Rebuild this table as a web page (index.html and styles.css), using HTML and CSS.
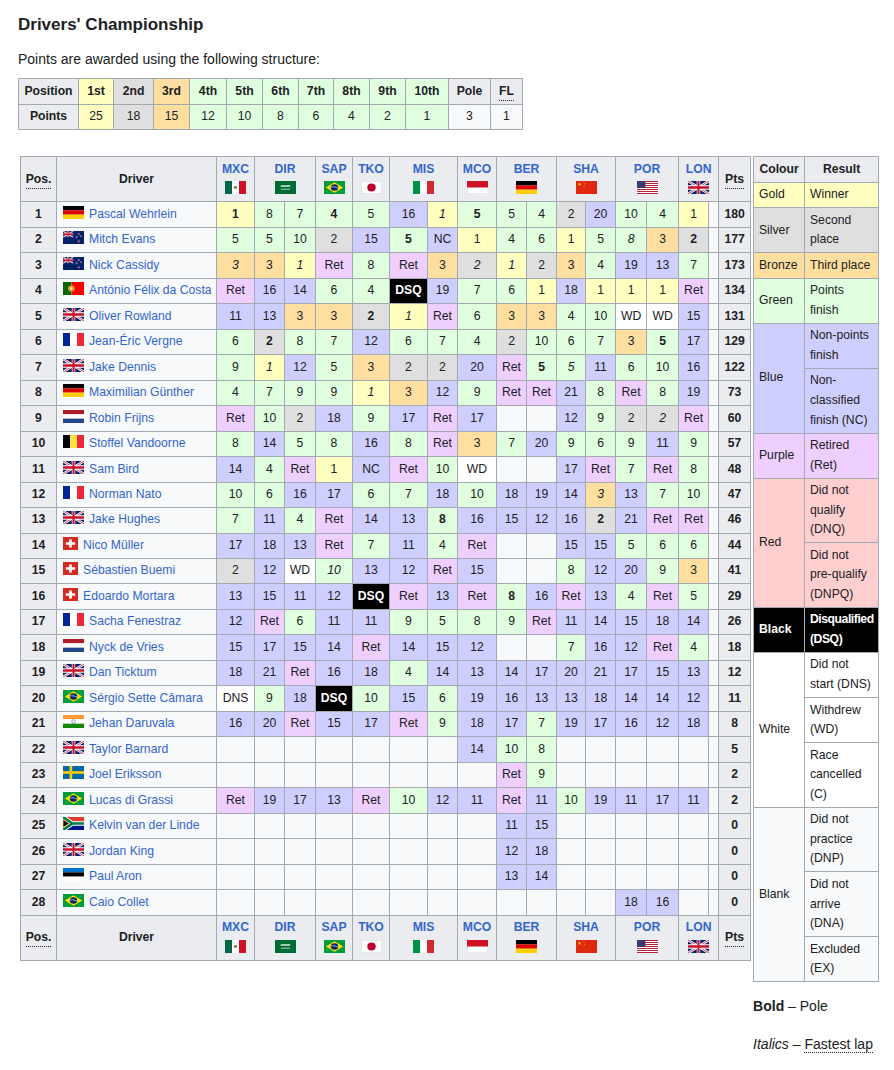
FILE: index.html
```html
<!DOCTYPE html>
<html lang="en">
<head>
<meta charset="utf-8">
<title>Drivers' Championship</title>
<link rel="stylesheet" href="styles.css">
</head>
<body>
<svg class="defs" width="0" height="0" aria-hidden="true">
  <defs>
    <symbol id="de" viewBox="0 0 5 3" preserveAspectRatio="none"><rect width="5" height="1" fill="#000"/><rect y="1" width="5" height="1" fill="#D00"/><rect y="2" width="5" height="1" fill="#FFCE00"/></symbol>
    <symbol id="gb" viewBox="0 0 60 30" preserveAspectRatio="none"><rect width="60" height="30" fill="#012169"/><path d="M0 0L60 30M60 0L0 30" stroke="#fff" stroke-width="6"/><path d="M0 0L60 30M60 0L0 30" stroke="#C8102E" stroke-width="2"/><path d="M30 0V30M0 15H60" stroke="#fff" stroke-width="10"/><path d="M30 0V30M0 15H60" stroke="#C8102E" stroke-width="6"/></symbol>
    <symbol id="nz" viewBox="0 0 60 30" preserveAspectRatio="none"><rect width="60" height="30" fill="#012169"/><use href="#gb" width="30" height="15"/><g fill="#C8102E" stroke="#fff" stroke-width="0.8"><circle cx="45" cy="7" r="2"/><circle cx="39" cy="14" r="2"/><circle cx="51" cy="12" r="1.8"/><circle cx="45" cy="24" r="2.2"/></g></symbol>
    <symbol id="pt" viewBox="0 0 30 20" preserveAspectRatio="none"><rect width="12" height="20" fill="#060"/><rect x="12" width="18" height="20" fill="#F00"/><circle cx="12" cy="10" r="4.5" fill="#FFE600"/><rect x="9.8" y="7.4" width="4.4" height="5.2" fill="#fff" stroke="#E00" stroke-width="0.9"/></symbol>
    <symbol id="fr" viewBox="0 0 3 2" preserveAspectRatio="none"><rect width="1" height="2" fill="#002395"/><rect x="1" width="1" height="2" fill="#fff"/><rect x="2" width="1" height="2" fill="#ED2939"/></symbol>
    <symbol id="nl" viewBox="0 0 3 3" preserveAspectRatio="none"><rect width="3" height="1" fill="#AE1C28"/><rect y="1" width="3" height="1" fill="#fff"/><rect y="2" width="3" height="1" fill="#21468B"/></symbol>
    <symbol id="be" viewBox="0 0 3 2" preserveAspectRatio="none"><rect width="1" height="2" fill="#000"/><rect x="1" width="1" height="2" fill="#FAE042"/><rect x="2" width="1" height="2" fill="#ED2939"/></symbol>
    <symbol id="ch" viewBox="0 0 32 32" preserveAspectRatio="none"><rect width="32" height="32" fill="#D52B1E"/><rect x="13" y="6" width="6" height="20" fill="#fff"/><rect x="6" y="13" width="20" height="6" fill="#fff"/></symbol>
    <symbol id="br" viewBox="0 0 20 14" preserveAspectRatio="none"><rect width="20" height="14" fill="#009C3B"/><polygon points="1.7,7 10,1.4 18.3,7 10,12.6" fill="#FFDF00"/><circle cx="10" cy="7" r="3.5" fill="#002776"/><path d="M6.6 6.3Q10 5.6 13.4 7.6" stroke="#fff" stroke-width="0.6" fill="none"/></symbol>
    <symbol id="in" viewBox="0 0 3 2" preserveAspectRatio="none"><rect width="3" height="0.667" fill="#FF9933"/><rect y="0.667" width="3" height="0.667" fill="#fff"/><rect y="1.333" width="3" height="0.667" fill="#138808"/><circle cx="1.5" cy="1" r="0.26" fill="none" stroke="#000080" stroke-width="0.06"/></symbol>
    <symbol id="se" viewBox="0 0 16 10" preserveAspectRatio="none"><rect width="16" height="10" fill="#006AA7"/><rect x="5" width="2" height="10" fill="#FECC00"/><rect y="4" width="16" height="2" fill="#FECC00"/></symbol>
    <symbol id="za" viewBox="0 0 9 6" preserveAspectRatio="none"><rect width="9" height="6" fill="#001489"/><rect width="9" height="3" fill="#E03C31"/><path d="M0 0L4 3L0 6M4 3H9" stroke="#fff" stroke-width="2" fill="none"/><path d="M0 0L4 3L0 6M4 3H9" stroke="#007A4D" stroke-width="1.2" fill="none"/><polygon points="0,1.1 2.6,3 0,4.9" fill="#000" stroke="#FFB612" stroke-width="0.4"/></symbol>
    <symbol id="ee" viewBox="0 0 3 3" preserveAspectRatio="none"><rect width="3" height="1" fill="#0072CE"/><rect y="1" width="3" height="1" fill="#000"/><rect y="2" width="3" height="1" fill="#fff"/></symbol>
    <symbol id="mx" viewBox="0 0 3 2" preserveAspectRatio="none"><rect width="1" height="2" fill="#006847"/><rect x="1" width="1" height="2" fill="#fff"/><rect x="2" width="1" height="2" fill="#CE1126"/><circle cx="1.5" cy="1" r="0.22" fill="#8C6B3A"/></symbol>
    <symbol id="sa" viewBox="0 0 30 20" preserveAspectRatio="none"><rect width="30" height="20" fill="#006C35"/><rect x="8" y="6.5" width="14" height="2.4" rx="1" fill="#fff" opacity="0.85"/><rect x="8.5" y="12" width="13" height="1" fill="#fff"/></symbol>
    <symbol id="jp" viewBox="0 0 30 20" preserveAspectRatio="none"><rect x="0.5" y="0.5" width="29" height="19" fill="#fff" stroke="#ddd"/><circle cx="15" cy="10" r="6" fill="#BC002D"/></symbol>
    <symbol id="it" viewBox="0 0 3 2" preserveAspectRatio="none"><rect width="1" height="2" fill="#009246"/><rect x="1" width="1" height="2" fill="#fff"/><rect x="2" width="1" height="2" fill="#CE2B37"/></symbol>
    <symbol id="mc" viewBox="0 0 30 20" preserveAspectRatio="none"><rect x="0.5" y="0.5" width="29" height="19" fill="#fff" stroke="#e5e5e5"/><rect width="30" height="10" fill="#CE1126"/></symbol>
    <symbol id="cn" viewBox="0 0 30 20" preserveAspectRatio="none"><rect width="30" height="20" fill="#DE2910"/><polygon points="5,2 5.674,4.073 7.853,4.073 6.09,5.354 6.763,7.427 5,6.146 3.237,7.427 3.91,5.354 2.147,4.073 4.326,4.073" fill="#FFDE00"/><g fill="#FFDE00"><circle cx="10" cy="2" r="0.7"/><circle cx="12" cy="4" r="0.7"/><circle cx="12" cy="7" r="0.7"/><circle cx="10" cy="9" r="0.7"/></g></symbol>
    <symbol id="us" viewBox="0 0 19 10" preserveAspectRatio="none"><rect width="19" height="10" fill="#B22234"/><g fill="#fff"><rect y="0.769" width="19" height="0.769"/><rect y="2.308" width="19" height="0.769"/><rect y="3.846" width="19" height="0.769"/><rect y="5.385" width="19" height="0.769"/><rect y="6.923" width="19" height="0.769"/><rect y="8.462" width="19" height="0.769"/></g><rect width="7.6" height="5.385" fill="#3C3B6E"/></symbol>
  </defs>
</svg>

<div class="page">
  <h3 class="title">Drivers' Championship</h3>
  <p class="intro">Points are awarded using the following structure:</p>

  <table class="points">
    <colgroup>
      <col class="c60"><col class="c35"><col class="c40"><col class="c36"><col class="c37"><col class="c36"><col class="c36"><col class="c35"><col class="c36"><col class="c36"><col class="c43"><col class="c42"><col class="c32">
    </colgroup>
    <tr>
      <th>Position</th><th class="y">1st</th><th class="s">2nd</th><th class="o">3rd</th><th class="g">4th</th><th class="g">5th</th><th class="g">6th</th><th class="g">7th</th><th class="g">8th</th><th class="g">9th</th><th class="g">10th</th><th>Pole</th><th><span class="abbr">FL</span></th>
    </tr>
    <tr>
      <th>Points</th><td class="y">25</td><td class="s">18</td><td class="o">15</td><td class="g">12</td><td class="g">10</td><td class="g">8</td><td class="g">6</td><td class="g">4</td><td class="g">2</td><td class="g">1</td><td>3</td><td>1</td>
    </tr>
  </table>

  <div class="standings">
    <table class="champ">
      <colgroup>
        <col class="w36"><col class="w160"><col class="w38"><col class="w30"><col class="w31"><col class="w37"><col class="w37"><col class="w38"><col class="w30"><col class="w39"><col class="w30"><col class="w30"><col class="w29"><col class="w30"><col class="w31"><col class="w32"><col class="w30"><col class="w10"><col class="w32">
      </colgroup>
      <thead>
        <tr>
          <th><span class="abbr">Pos.</span></th>
          <th>Driver</th>
          <th class="race"><a href="#">MXC</a><br><svg class="hfl"><use href="#mx"/></svg></th>
          <th class="race" colspan="2"><a href="#">DIR</a><br><svg class="hfl"><use href="#sa"/></svg></th>
          <th class="race"><a href="#">SAP</a><br><svg class="hfl"><use href="#br"/></svg></th>
          <th class="race"><a href="#">TKO</a><br><svg class="hfl"><use href="#jp"/></svg></th>
          <th class="race" colspan="2"><a href="#">MIS</a><br><svg class="hfl"><use href="#it"/></svg></th>
          <th class="race"><a href="#">MCO</a><br><svg class="hfl"><use href="#mc"/></svg></th>
          <th class="race" colspan="2"><a href="#">BER</a><br><svg class="hfl"><use href="#de"/></svg></th>
          <th class="race" colspan="2"><a href="#">SHA</a><br><svg class="hfl"><use href="#cn"/></svg></th>
          <th class="race" colspan="2"><a href="#">POR</a><br><svg class="hfl"><use href="#us"/></svg></th>
          <th class="race" colspan="2"><a href="#">LON</a><br><svg class="hfl"><use href="#gb"/></svg></th>
          <th><span class="abbr">Pts</span></th>
        </tr>
      </thead>
      <tbody>
        <tr><th>1</th><td class="drv"><svg class="fl"><use href="#de"/></svg><a href="#">Pascal Wehrlein</a></td><td class="y"><b>1</b></td><td class="g">8</td><td class="g">7</td><td class="g"><b>4</b></td><td class="g">5</td><td class="b">16</td><td class="y"><i>1</i></td><td class="g"><b>5</b></td><td class="g">5</td><td class="g">4</td><td class="s">2</td><td class="b">20</td><td class="g">10</td><td class="g">4</td><td class="y">1</td><td></td><th>180</th></tr>
        <tr><th>2</th><td class="drv"><svg class="fl"><use href="#nz"/></svg><a href="#">Mitch Evans</a></td><td class="g">5</td><td class="g">5</td><td class="g">10</td><td class="s">2</td><td class="b">15</td><td class="g"><b>5</b></td><td class="b">NC</td><td class="y">1</td><td class="g">4</td><td class="g">6</td><td class="y">1</td><td class="g">5</td><td class="g"><i>8</i></td><td class="o">3</td><td class="s"><b>2</b></td><td></td><th>177</th></tr>
        <tr><th>3</th><td class="drv"><svg class="fl"><use href="#nz"/></svg><a href="#">Nick Cassidy</a></td><td class="o"><i>3</i></td><td class="o">3</td><td class="y"><i>1</i></td><td class="p">Ret</td><td class="g">8</td><td class="p">Ret</td><td class="o">3</td><td class="s"><i>2</i></td><td class="y"><i>1</i></td><td class="s">2</td><td class="o">3</td><td class="g">4</td><td class="b">19</td><td class="b">13</td><td class="g">7</td><td></td><th>173</th></tr>
        <tr><th>4</th><td class="drv"><svg class="fl"><use href="#pt"/></svg><a href="#">António Félix da Costa</a></td><td class="p">Ret</td><td class="b">16</td><td class="b">14</td><td class="g">6</td><td class="g">4</td><td class="k"><b>DSQ</b></td><td class="b">19</td><td class="g">7</td><td class="g">6</td><td class="y">1</td><td class="b">18</td><td class="y">1</td><td class="y">1</td><td class="y">1</td><td class="p">Ret</td><td></td><th>134</th></tr>
        <tr><th>5</th><td class="drv"><svg class="fl"><use href="#gb"/></svg><a href="#">Oliver Rowland</a></td><td class="b">11</td><td class="b">13</td><td class="o">3</td><td class="o">3</td><td class="s"><b>2</b></td><td class="y"><i>1</i></td><td class="p">Ret</td><td class="g">6</td><td class="o">3</td><td class="o">3</td><td class="g">4</td><td class="g">10</td><td class="w">WD</td><td class="w">WD</td><td class="b">15</td><td></td><th>131</th></tr>
        <tr><th>6</th><td class="drv"><svg class="fl"><use href="#fr"/></svg><a href="#">Jean-Éric Vergne</a></td><td class="g">6</td><td class="s"><b>2</b></td><td class="g">8</td><td class="g">7</td><td class="b">12</td><td class="g">6</td><td class="g">7</td><td class="g">4</td><td class="s">2</td><td class="g">10</td><td class="g">6</td><td class="g">7</td><td class="o">3</td><td class="g"><b>5</b></td><td class="b">17</td><td></td><th>129</th></tr>
        <tr><th>7</th><td class="drv"><svg class="fl"><use href="#gb"/></svg><a href="#">Jake Dennis</a></td><td class="g">9</td><td class="y"><i>1</i></td><td class="b">12</td><td class="g">5</td><td class="o">3</td><td class="s">2</td><td class="s">2</td><td class="b">20</td><td class="p">Ret</td><td class="g"><b>5</b></td><td class="g"><i>5</i></td><td class="b">11</td><td class="g">6</td><td class="g">10</td><td class="b">16</td><td></td><th>122</th></tr>
        <tr><th>8</th><td class="drv"><svg class="fl"><use href="#de"/></svg><a href="#">Maximilian Günther</a></td><td class="g">4</td><td class="g">7</td><td class="g">9</td><td class="g">9</td><td class="y"><i>1</i></td><td class="o">3</td><td class="b">12</td><td class="g">9</td><td class="p">Ret</td><td class="p">Ret</td><td class="b">21</td><td class="g">8</td><td class="p">Ret</td><td class="g">8</td><td class="b">19</td><td></td><th>73</th></tr>
        <tr><th>9</th><td class="drv"><svg class="fl"><use href="#nl"/></svg><a href="#">Robin Frijns</a></td><td class="p">Ret</td><td class="g">10</td><td class="s">2</td><td class="b">18</td><td class="g">9</td><td class="b">17</td><td class="p">Ret</td><td class="b">17</td><td></td><td></td><td class="b">12</td><td class="g">9</td><td class="s">2</td><td class="s"><i>2</i></td><td class="p">Ret</td><td></td><th>60</th></tr>
        <tr><th>10</th><td class="drv"><svg class="fl"><use href="#be"/></svg><a href="#">Stoffel Vandoorne</a></td><td class="g">8</td><td class="b">14</td><td class="g">5</td><td class="g">8</td><td class="b">16</td><td class="g">8</td><td class="p">Ret</td><td class="o">3</td><td class="g">7</td><td class="b">20</td><td class="g">9</td><td class="g">6</td><td class="g">9</td><td class="b">11</td><td class="g">9</td><td></td><th>57</th></tr>
        <tr><th>11</th><td class="drv"><svg class="fl"><use href="#gb"/></svg><a href="#">Sam Bird</a></td><td class="b">14</td><td class="g">4</td><td class="p">Ret</td><td class="y">1</td><td class="b">NC</td><td class="p">Ret</td><td class="g">10</td><td class="w">WD</td><td></td><td></td><td class="b">17</td><td class="p">Ret</td><td class="g">7</td><td class="p">Ret</td><td class="g">8</td><td></td><th>48</th></tr>
        <tr><th>12</th><td class="drv"><svg class="fl"><use href="#fr"/></svg><a href="#">Norman Nato</a></td><td class="g">10</td><td class="g">6</td><td class="b">16</td><td class="b">17</td><td class="g">6</td><td class="g">7</td><td class="b">18</td><td class="g">10</td><td class="b">18</td><td class="b">19</td><td class="b">14</td><td class="o"><i>3</i></td><td class="b">13</td><td class="g">7</td><td class="g">10</td><td></td><th>47</th></tr>
        <tr><th>13</th><td class="drv"><svg class="fl"><use href="#gb"/></svg><a href="#">Jake Hughes</a></td><td class="g">7</td><td class="b">11</td><td class="g">4</td><td class="p">Ret</td><td class="b">14</td><td class="b">13</td><td class="g"><b>8</b></td><td class="b">16</td><td class="b">15</td><td class="b">12</td><td class="b">16</td><td class="s"><b>2</b></td><td class="b">21</td><td class="p">Ret</td><td class="p">Ret</td><td></td><th>46</th></tr>
        <tr><th>14</th><td class="drv"><svg class="fl sq"><use href="#ch"/></svg><a href="#">Nico Müller</a></td><td class="b">17</td><td class="b">18</td><td class="b">13</td><td class="p">Ret</td><td class="g">7</td><td class="b">11</td><td class="g">4</td><td class="p">Ret</td><td></td><td></td><td class="b">15</td><td class="b">15</td><td class="g">5</td><td class="g">6</td><td class="g">6</td><td></td><th>44</th></tr>
        <tr><th>15</th><td class="drv"><svg class="fl sq"><use href="#ch"/></svg><a href="#">Sébastien Buemi</a></td><td class="s">2</td><td class="b">12</td><td class="w">WD</td><td class="g"><i>10</i></td><td class="b">13</td><td class="b">12</td><td class="p">Ret</td><td class="b">15</td><td></td><td></td><td class="g">8</td><td class="b">12</td><td class="b">20</td><td class="g">9</td><td class="o">3</td><td></td><th>41</th></tr>
        <tr><th>16</th><td class="drv"><svg class="fl sq"><use href="#ch"/></svg><a href="#">Edoardo Mortara</a></td><td class="b">13</td><td class="b">15</td><td class="b">11</td><td class="b">12</td><td class="k"><b>DSQ</b></td><td class="p">Ret</td><td class="b">13</td><td class="p">Ret</td><td class="g"><b>8</b></td><td class="b">16</td><td class="p">Ret</td><td class="b">13</td><td class="g">4</td><td class="p">Ret</td><td class="g">5</td><td></td><th>29</th></tr>
        <tr><th>17</th><td class="drv"><svg class="fl"><use href="#fr"/></svg><a href="#">Sacha Fenestraz</a></td><td class="b">12</td><td class="p">Ret</td><td class="g">6</td><td class="b">11</td><td class="b">11</td><td class="g">9</td><td class="g">5</td><td class="g">8</td><td class="g">9</td><td class="p">Ret</td><td class="b">11</td><td class="b">14</td><td class="b">15</td><td class="b">18</td><td class="b">14</td><td></td><th>26</th></tr>
        <tr><th>18</th><td class="drv"><svg class="fl"><use href="#nl"/></svg><a href="#">Nyck de Vries</a></td><td class="b">15</td><td class="b">17</td><td class="b">15</td><td class="b">14</td><td class="p">Ret</td><td class="b">14</td><td class="b">15</td><td class="b">12</td><td></td><td></td><td class="g">7</td><td class="b">16</td><td class="b">12</td><td class="p">Ret</td><td class="g">4</td><td></td><th>18</th></tr>
        <tr><th>19</th><td class="drv"><svg class="fl"><use href="#gb"/></svg><a href="#">Dan Ticktum</a></td><td class="b">18</td><td class="b">21</td><td class="p">Ret</td><td class="b">16</td><td class="b">18</td><td class="g">4</td><td class="b">14</td><td class="b">13</td><td class="b">14</td><td class="b">17</td><td class="b">20</td><td class="b">21</td><td class="b">17</td><td class="b">15</td><td class="b">13</td><td></td><th>12</th></tr>
        <tr><th>20</th><td class="drv"><svg class="fl"><use href="#br"/></svg><a href="#">Sérgio Sette Câmara</a></td><td class="w">DNS</td><td class="g">9</td><td class="b">18</td><td class="k"><b>DSQ</b></td><td class="g">10</td><td class="b">15</td><td class="g">6</td><td class="b">19</td><td class="b">16</td><td class="b">13</td><td class="b">13</td><td class="b">18</td><td class="b">14</td><td class="b">14</td><td class="b">12</td><td></td><th>11</th></tr>
        <tr><th>21</th><td class="drv"><svg class="fl"><use href="#in"/></svg><a href="#">Jehan Daruvala</a></td><td class="b">16</td><td class="b">20</td><td class="p">Ret</td><td class="b">15</td><td class="b">17</td><td class="p">Ret</td><td class="g">9</td><td class="b">18</td><td class="b">17</td><td class="g">7</td><td class="b">19</td><td class="b">17</td><td class="b">16</td><td class="b">12</td><td class="b">18</td><td></td><th>8</th></tr>
        <tr><th>22</th><td class="drv"><svg class="fl"><use href="#gb"/></svg><a href="#">Taylor Barnard</a></td><td></td><td></td><td></td><td></td><td></td><td></td><td></td><td class="b">14</td><td class="g">10</td><td class="g">8</td><td></td><td></td><td></td><td></td><td></td><td></td><th>5</th></tr>
        <tr><th>23</th><td class="drv"><svg class="fl"><use href="#se"/></svg><a href="#">Joel Eriksson</a></td><td></td><td></td><td></td><td></td><td></td><td></td><td></td><td></td><td class="p">Ret</td><td class="g">9</td><td></td><td></td><td></td><td></td><td></td><td></td><th>2</th></tr>
        <tr><th>24</th><td class="drv"><svg class="fl"><use href="#br"/></svg><a href="#">Lucas di Grassi</a></td><td class="p">Ret</td><td class="b">19</td><td class="b">17</td><td class="b">13</td><td class="p">Ret</td><td class="g">10</td><td class="b">12</td><td class="b">11</td><td class="p">Ret</td><td class="b">11</td><td class="g">10</td><td class="b">19</td><td class="b">11</td><td class="b">17</td><td class="b">11</td><td></td><th>2</th></tr>
        <tr><th>25</th><td class="drv"><svg class="fl"><use href="#za"/></svg><a href="#">Kelvin van der Linde</a></td><td></td><td></td><td></td><td></td><td></td><td></td><td></td><td></td><td class="b">11</td><td class="b">15</td><td></td><td></td><td></td><td></td><td></td><td></td><th>0</th></tr>
        <tr><th>26</th><td class="drv"><svg class="fl"><use href="#gb"/></svg><a href="#">Jordan King</a></td><td></td><td></td><td></td><td></td><td></td><td></td><td></td><td></td><td class="b">12</td><td class="b">18</td><td></td><td></td><td></td><td></td><td></td><td></td><th>0</th></tr>
        <tr><th>27</th><td class="drv"><svg class="fl"><use href="#ee"/></svg><a href="#">Paul Aron</a></td><td></td><td></td><td></td><td></td><td></td><td></td><td></td><td></td><td class="b">13</td><td class="b">14</td><td></td><td></td><td></td><td></td><td></td><td></td><th>0</th></tr>
        <tr><th>28</th><td class="drv"><svg class="fl"><use href="#br"/></svg><a href="#">Caio Collet</a></td><td></td><td></td><td></td><td></td><td></td><td></td><td></td><td></td><td></td><td></td><td></td><td></td><td class="b">18</td><td class="b">16</td><td></td><td></td><th>0</th></tr>
      </tbody>
      <tfoot>
        <tr>
          <th><span class="abbr">Pos.</span></th>
          <th>Driver</th>
          <th class="race"><a href="#">MXC</a><br><svg class="hfl"><use href="#mx"/></svg></th>
          <th class="race" colspan="2"><a href="#">DIR</a><br><svg class="hfl"><use href="#sa"/></svg></th>
          <th class="race"><a href="#">SAP</a><br><svg class="hfl"><use href="#br"/></svg></th>
          <th class="race"><a href="#">TKO</a><br><svg class="hfl"><use href="#jp"/></svg></th>
          <th class="race" colspan="2"><a href="#">MIS</a><br><svg class="hfl"><use href="#it"/></svg></th>
          <th class="race"><a href="#">MCO</a><br><svg class="hfl"><use href="#mc"/></svg></th>
          <th class="race" colspan="2"><a href="#">BER</a><br><svg class="hfl"><use href="#de"/></svg></th>
          <th class="race" colspan="2"><a href="#">SHA</a><br><svg class="hfl"><use href="#cn"/></svg></th>
          <th class="race" colspan="2"><a href="#">POR</a><br><svg class="hfl"><use href="#us"/></svg></th>
          <th class="race" colspan="2"><a href="#">LON</a><br><svg class="hfl"><use href="#gb"/></svg></th>
          <th><span class="abbr">Pts</span></th>
        </tr>
      </tfoot>
    </table>

    <div class="side">
      <table class="legend">
        <colgroup><col class="lc1"><col class="lc2"></colgroup>
        <tr><th>Colour</th><th>Result</th></tr>
        <tr><td class="y">Gold</td><td class="y">Winner</td></tr>
        <tr><td class="s">Silver</td><td class="s">Second<br>place</td></tr>
        <tr><td class="o">Bronze</td><td class="o">Third place</td></tr>
        <tr><td class="g">Green</td><td class="g">Points<br>finish</td></tr>
        <tr><td class="b" rowspan="2">Blue</td><td class="b">Non-points<br>finish</td></tr>
        <tr><td class="b">Non-<br>classified<br>finish (NC)</td></tr>
        <tr><td class="p">Purple</td><td class="p">Retired<br>(Ret)</td></tr>
        <tr><td class="r" rowspan="2">Red</td><td class="r">Did not<br>qualify<br>(DNQ)</td></tr>
        <tr><td class="r">Did not<br>pre-qualify<br>(DNPQ)</td></tr>
        <tr><td class="k"><b>Black</b></td><td class="k"><b class="tight">Disqualified<br>(DSQ)</b></td></tr>
        <tr><td class="w" rowspan="3">White</td><td class="w">Did not<br>start (DNS)</td></tr>
        <tr><td class="w">Withdrew<br>(WD)</td></tr>
        <tr><td class="w">Race<br>cancelled<br>(C)</td></tr>
        <tr><td rowspan="3">Blank</td><td>Did not<br>practice<br>(DNP)</td></tr>
        <tr><td>Did not<br>arrive<br>(DNA)</td></tr>
        <tr><td>Excluded<br>(EX)</td></tr>
      </table>
      <p class="note first"><b>Bold</b> – Pole</p>
      <p class="note"><i>Italics</i> – <span class="dotted">Fastest lap</span></p>
    </div>
  </div>
</div>
</body>
</html>
```

FILE: styles.css
```css
html, body {
  margin: 0;
  padding: 0;
  background: #ffffff;
}

body {
  font-family: "Liberation Sans", Arial, sans-serif;
  color: #202122;
}

.defs {
  position: absolute;
  width: 0;
  height: 0;
  overflow: hidden;
}

.page {
  padding-left: 18px;
}

.title {
  font-size: 17px;
  font-weight: bold;
  line-height: 24px;
  margin: 13px 0 0;
}

.intro {
  font-size: 14px;
  line-height: 22.4px;
  margin: 11px 0 8px;
}

table {
  border-collapse: collapse;
  background: #f8f9fa;
  color: #202122;
  font-size: 12.2px;
  line-height: 19.6px;
}

td, th {
  border: 1px solid #a2a9b1;
  padding: 2.45px 4.9px;
}

th {
  background: #eaecf0;
  font-weight: bold;
  text-align: center;
}

a {
  color: #3366cc;
  text-decoration: none;
}

.abbr {
  border-bottom: 1px dotted #202122;
  padding-bottom: 2px;
}

/* result colours */
.y { background: #ffffbf; }
.s { background: #dfdfdf; }
.o { background: #ffdf9f; }
.g { background: #dfffdf; }
.b { background: #cfcfff; }
.p { background: #efcfff; }
.r { background: #ffcfcf; }
.w { background: #ffffff; }
.k { background: #000000; color: #ffffff; }

/* points table */
.points {
  table-layout: fixed;
  width: 504px;
  text-align: center;
}
.points td { text-align: center; }
.c60 { width: 60px; }
.c35 { width: 35px; }
.c40 { width: 40px; }
.c36 { width: 36px; }
.c37 { width: 37px; }
.c43 { width: 43px; }
.c42 { width: 42px; }
.c32 { width: 32px; }

/* standings layout */
.standings {
  display: flex;
  align-items: flex-start;
  gap: 2px;
  margin: 26px 0 0 2px;
}

.champ {
  table-layout: fixed;
  width: 731px;
  text-align: center;
  flex: none;
}
.champ td, .champ th {
  white-space: nowrap;
  padding-left: 2px;
  padding-right: 2px;
}
.champ td { text-align: center; }
.champ td.drv {
  text-align: left;
  background: #f8f9fa;
  padding-left: 6px;
}
.race a { font-weight: bold; }

.w36 { width: 36px; }
.w160 { width: 160px; }
.w38 { width: 38px; }
.w30 { width: 30px; }
.w31 { width: 31px; }
.w37 { width: 37px; }
.w39 { width: 39px; }
.w29 { width: 29px; }
.w32 { width: 32px; }
.w10 { width: 10px; }

.fl {
  width: 21px;
  height: 13px;
  margin-right: 5px;
  vertical-align: -1px;
}
.fl.sq {
  width: 15px;
  height: 13px;
}
.hfl {
  width: 21px;
  height: 13px;
  vertical-align: -2px;
}

/* legend */
.side {
  display: flex;
  flex-direction: column;
  flex: none;
}
.legend {
  table-layout: fixed;
  width: 125px;
}
.legend td {
  text-align: left;
  white-space: nowrap;
  vertical-align: middle;
}
.lc1 { width: 51px; }
.lc2 { width: 74px; }
.tight { letter-spacing: -0.45px; }

.note {
  font-size: 14px;
  line-height: 22.4px;
  margin: 15.6px 0 0;
}
.note.first { margin-top: 13px; }
.dotted {
  border-bottom: 1px dotted #202122;
}
```
